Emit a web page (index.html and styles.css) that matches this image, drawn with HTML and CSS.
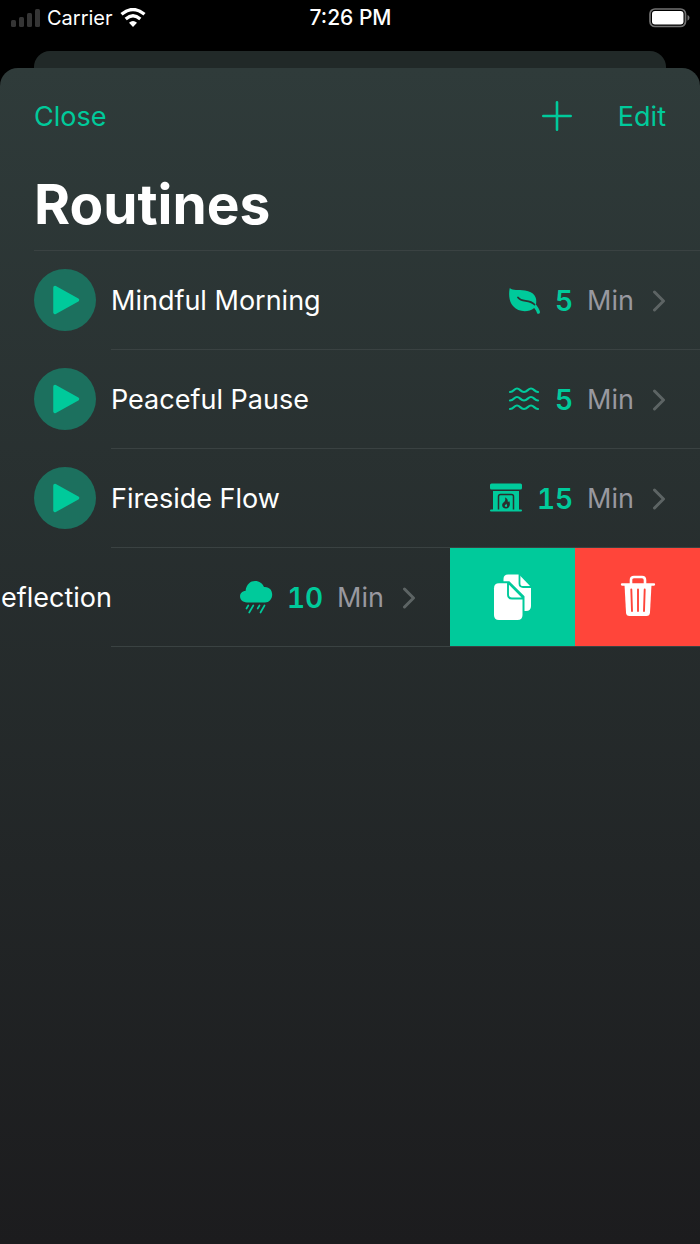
FILE: index.html
```html
<!DOCTYPE html>
<html lang="en">
<head>
<meta charset="utf-8">
<meta name="viewport" content="width=device-width, initial-scale=1">
<title>Routines</title>
<link rel="stylesheet" href="styles.css">
</head>
<body>
<svg class="symbols" aria-hidden="true">
  <symbol id="play" viewBox="0 0 62 62"><path d="M21 18.500L43.500 31L21 43.500Z" fill="currentColor" stroke="currentColor" stroke-width="3.500" stroke-linejoin="round"/></symbol>
  <symbol id="chevron" viewBox="0 0 14 22"><path d="M2.500 2L11.500 11L2.500 20" fill="none" stroke="currentColor" stroke-width="3" stroke-linecap="round" stroke-linejoin="round"/></symbol>
</svg>
<header class="status">
  <div class="status-left">
    <svg width="29" height="18" viewBox="0 0 29 18" fill="#353535" aria-hidden="true"><rect x="0" y="11" width="5" height="7" rx="1.500"/><rect x="8" y="8" width="5" height="10" rx="1.500"/><rect x="16" y="4" width="5" height="14" rx="1.500"/><rect x="24" y="0" width="5" height="18" rx="1.500"/></svg>
    <span>Carrier</span>
    <svg width="26" height="19" viewBox="0 0 26 19" aria-hidden="true"><path d="M1.500 6.300Q13-3.300 24.500 6.300M5.700 10.900Q13 4.700 20.300 10.900" fill="none" stroke="#fff" stroke-width="3.300"/><path d="M9 14.800Q13 11.400 17 14.800L13 19Z" fill="#fff"/></svg>
  </div>
  <time class="clock">7:26 PM</time>
  <div class="status-right">
    <svg width="41" height="20" viewBox="0 0 41 20" aria-hidden="true"><rect x="1" y="1" width="35.500" height="17.500" rx="5" fill="none" stroke="#727272" stroke-width="1.700"/><rect x="3" y="3" width="31.500" height="13.500" rx="3" fill="#fff"/><path d="M38.500 7Q40.500 7.500 40.500 9.800Q40.500 12 38.500 12.700Z" fill="#727272"/></svg>
  </div>
</header>
<div class="backdrop"></div>
<main class="sheet">
  <nav class="toolbar">
    <button class="text-button" type="button">Close</button>
    <div class="toolbar-actions">
      <button class="text-button add" type="button" aria-label="Add"><svg width="30" height="30" viewBox="0 0 30 30"><path d="M15 1.300V28.700M1.300 15H28.700" stroke="currentColor" stroke-width="2.600" stroke-linecap="round"/></svg></button>
      <button class="text-button" type="button">Edit</button>
    </div>
  </nav>
  <h1 class="title">Routines</h1>
  <ul class="routines">
    <li class="row">
      <button class="play" type="button" aria-label="Play"><svg width="62" height="62"><use href="#play"/></svg></button>
      <a class="detail" href="#">
        <span class="name">Mindful Morning</span>
        <svg class="kind" width="34" height="34" viewBox="0 0 34 34"><path fill="currentColor" d="M2.800 4C6 7 11 5.500 18 6.500C27 8 30.500 13 29 20.500C30.500 22.500 32.500 25.500 33 28C33 30 30.500 30.500 30 29C29.300 27 28.500 25.500 27.200 24C21 29 11 28 6 22C1.500 17 1.700 8.500 2.800 4Z"/><path d="M11 13.500C15 19 22 14.500 27.500 20.500" fill="none" stroke="#2b3433" stroke-width="1.800" stroke-linecap="round"/></svg>
        <span class="count">5</span><span class="unit">Min</span>
        <svg class="chevron" width="14" height="22"><use href="#chevron"/></svg>
      </a>
    </li>
    <li class="row">
      <button class="play" type="button" aria-label="Play"><svg width="62" height="62"><use href="#play"/></svg></button>
      <a class="detail" href="#">
        <span class="name">Peaceful Pause</span>
        <svg class="kind" width="34" height="34" viewBox="0 0 34 34"><g fill="none" stroke="currentColor" stroke-width="2.200" stroke-linecap="round" stroke-linejoin="round"><path id="wave" d="M3 9C7 9 7 5.500 10 5.500C13 5.500 13.500 9 17 9C20.500 9 21 5.500 24 5.500C27 5.500 27.500 9 31 9"/><use href="#wave" y="8.500"/><use href="#wave" y="17"/></g></svg>
        <span class="count">5</span><span class="unit">Min</span>
        <svg class="chevron" width="14" height="22"><use href="#chevron"/></svg>
      </a>
    </li>
    <li class="row">
      <button class="play" type="button" aria-label="Play"><svg width="62" height="62"><use href="#play"/></svg></button>
      <a class="detail" href="#">
        <span class="name">Fireside Flow</span>
        <svg class="kind" width="34" height="34" viewBox="0 0 34 34"><rect x="1" y="1.500" width="32" height="6" rx="1.500" fill="currentColor"/><path d="M4 9H30V27.500H32a1 1 0 0 1 0 2H2a1 1 0 0 1 0-2H4Z" fill="currentColor"/><path d="M9.500 27.500V14.500Q9.500 12.500 11.500 12.500H22.500Q24.500 12.500 24.500 14.500V27.500" fill="none" stroke="#29312f" stroke-width="1.500"/><path d="M16 15.500C19.500 17 18.500 19 19 20C20 19.500 20 18.700 20 18.700C22 22 20.500 26.500 17 26.500C13 26.500 12 22.500 14.500 20.500C16.500 19 16.500 17.500 16 15.500Z" fill="#29312f"/><path d="M17.500 21.500Q19 25 17 25Q15 24.500 16 22.800Q17.500 23 17.500 21.500Z" fill="currentColor"/></svg>
        <span class="count">15</span><span class="unit">Min</span>
        <svg class="chevron" width="14" height="22"><use href="#chevron"/></svg>
      </a>
    </li>
    <li class="row swiped">
      <a class="detail" href="#">
        <span class="name">eflection</span>
        <svg class="kind" width="34" height="34" viewBox="0 0 34 34"><path fill="currentColor" d="M8 21.500C-1 21.500-1 10 6.500 10C7.500 3 11.500 0 16 0C20.500 0 23.500 2.500 25 6C30.500 5.500 33.200 9.500 33.200 13.500C33.200 18 30 21.500 26 21.500Z"/><path d="M9.300 24.500L7.500 27.500M14.300 24.500L10.200 31.500M20.500 24.500L18.700 27.500M25.500 24.500L21.500 31.500" fill="none" stroke="currentColor" stroke-width="1.700" stroke-linecap="round"/></svg>
        <span class="count">10</span><span class="unit">Min</span>
        <svg class="chevron" width="14" height="22"><use href="#chevron"/></svg>
      </a>
      <button class="action duplicate" type="button" aria-label="Duplicate"><svg width="40" height="48" viewBox="0 0 40 48"><path d="M10.500 9V6Q10.500 1.500 15 1.500H26L38 14V33Q38 38 33 38H15Z" fill="#fff"/><path d="M26.500 1V10.500Q26.500 14 30 14H39" fill="none" stroke="#00ca9b" stroke-width="1.800"/><path d="M6 10.200H15.500L29.500 24V42Q29.500 47 24.500 47H6Q1 47 1 42V15.200Q1 10.200 6 10.200Z" fill="#fff" stroke="#00ca9b" stroke-width="4" paint-order="stroke"/><path d="M15 9.500V21.500Q15 25.500 19 25.500H30.500M15 9.500L30.500 25" fill="none" stroke="#00ca9b" stroke-width="1.900"/></svg></button>
      <button class="action delete" type="button" aria-label="Delete"><svg width="36" height="44" viewBox="0 0 36 44"><path d="M11 9V5Q11 2 14 2H22Q25 2 25 5V9" fill="none" stroke="#fff" stroke-width="2.600"/><path d="M2 9.500H34" stroke="#fff" stroke-width="2.300" stroke-linecap="round"/><path d="M4.500 9.500H31.500L30 37.500Q29.800 41 26.500 41H9.500Q6.200 41 6 37.500Z" fill="#fff"/><path d="M11.300 14.500L12 36M18 14.500V36M24.700 14.500L24 36" stroke="#ff453a" stroke-width="1.900" stroke-linecap="round"/></svg></button>
    </li>
  </ul>
</main>
</body>
</html>
```
FILE: styles.css
```css
* { box-sizing: border-box; }
body {
  margin: 0;
  min-height: 100vh;
  display: flex;
  flex-direction: column;
  background: #000;
  color: #fff;
  font-family: Inter, "Liberation Sans", sans-serif;
  font-size: 27px;
}
button {
  border: 0;
  padding: 0;
  background: none;
  color: inherit;
  font: inherit;
  cursor: pointer;
}
svg { display: block; flex: none; }
.symbols { position: absolute; width: 0; height: 0; }

.status {
  display: grid;
  grid-template-columns: 1fr auto 1fr;
  align-items: center;
  height: 35px;
  padding: 0 10px 0 11px;
  font-size: 20px;
}
.status-left { display: flex; align-items: center; gap: 7px; }
.status-right { display: flex; justify-content: flex-end; }
.clock { font-size: 21px; font-weight: 500; }

.backdrop {
  height: 17px;
  margin: 16px 34px 0;
  border-radius: 16px 16px 0 0;
  background: #212928;
}
.sheet {
  flex: 1;
  border-radius: 18px 18px 0 0;
  background: linear-gradient(#2f3b3a, #1c1c1e);
  overflow: hidden;
}
.toolbar {
  display: flex;
  justify-content: space-between;
  align-items: center;
  height: 96px;
  padding: 0 34px;
  color: #00ca9b;
}
.toolbar-actions { display: flex; align-items: center; gap: 46px; }
.title {
  margin: 0;
  height: 86px;
  padding-left: 34px;
  font-size: 55px;
  line-height: 80px;
  font-weight: 700;
}

.routines { margin: 0; padding: 0; list-style: none; }
.row {
  position: relative;
  display: flex;
  align-items: center;
  height: 99px;
  padding-left: 34px;
}
.row::before {
  content: "";
  position: absolute;
  top: 0;
  left: 111px;
  right: 0;
  height: 1px;
  background: #3a4242;
}
.row:first-child::before { left: 34px; }
.play {
  width: 62px;
  height: 62px;
  border-radius: 50%;
  background: #1c705e;
  color: #00ca9b;
}
.detail {
  flex: 1;
  display: flex;
  align-items: center;
  height: 100%;
  padding: 2px 34px 0 15px;
  color: inherit;
  text-decoration: none;
}
.name { flex: 1; }
.kind { color: #00ca9b; }
.count {
  margin-left: 14px;
  color: #00ca9b;
  font-size: 28px;
  font-weight: 600;
  font-variant-numeric: tabular-nums;
}
.unit { margin-left: 14px; color: #98989f; }
.chevron { margin-left: 18px; color: #5d6464; }

.swiped { padding-left: 0; }
.swiped::after {
  content: "";
  position: absolute;
  bottom: -1px;
  left: 111px;
  right: 0;
  height: 1px;
  background: #3a4242;
}
.swiped .detail { padding-left: 1px; }
.action {
  display: flex;
  align-items: center;
  justify-content: center;
  width: 125px;
  height: 100%;
}
.duplicate { background: #00ca9b; }
.delete { background: #ff453a; }
```
